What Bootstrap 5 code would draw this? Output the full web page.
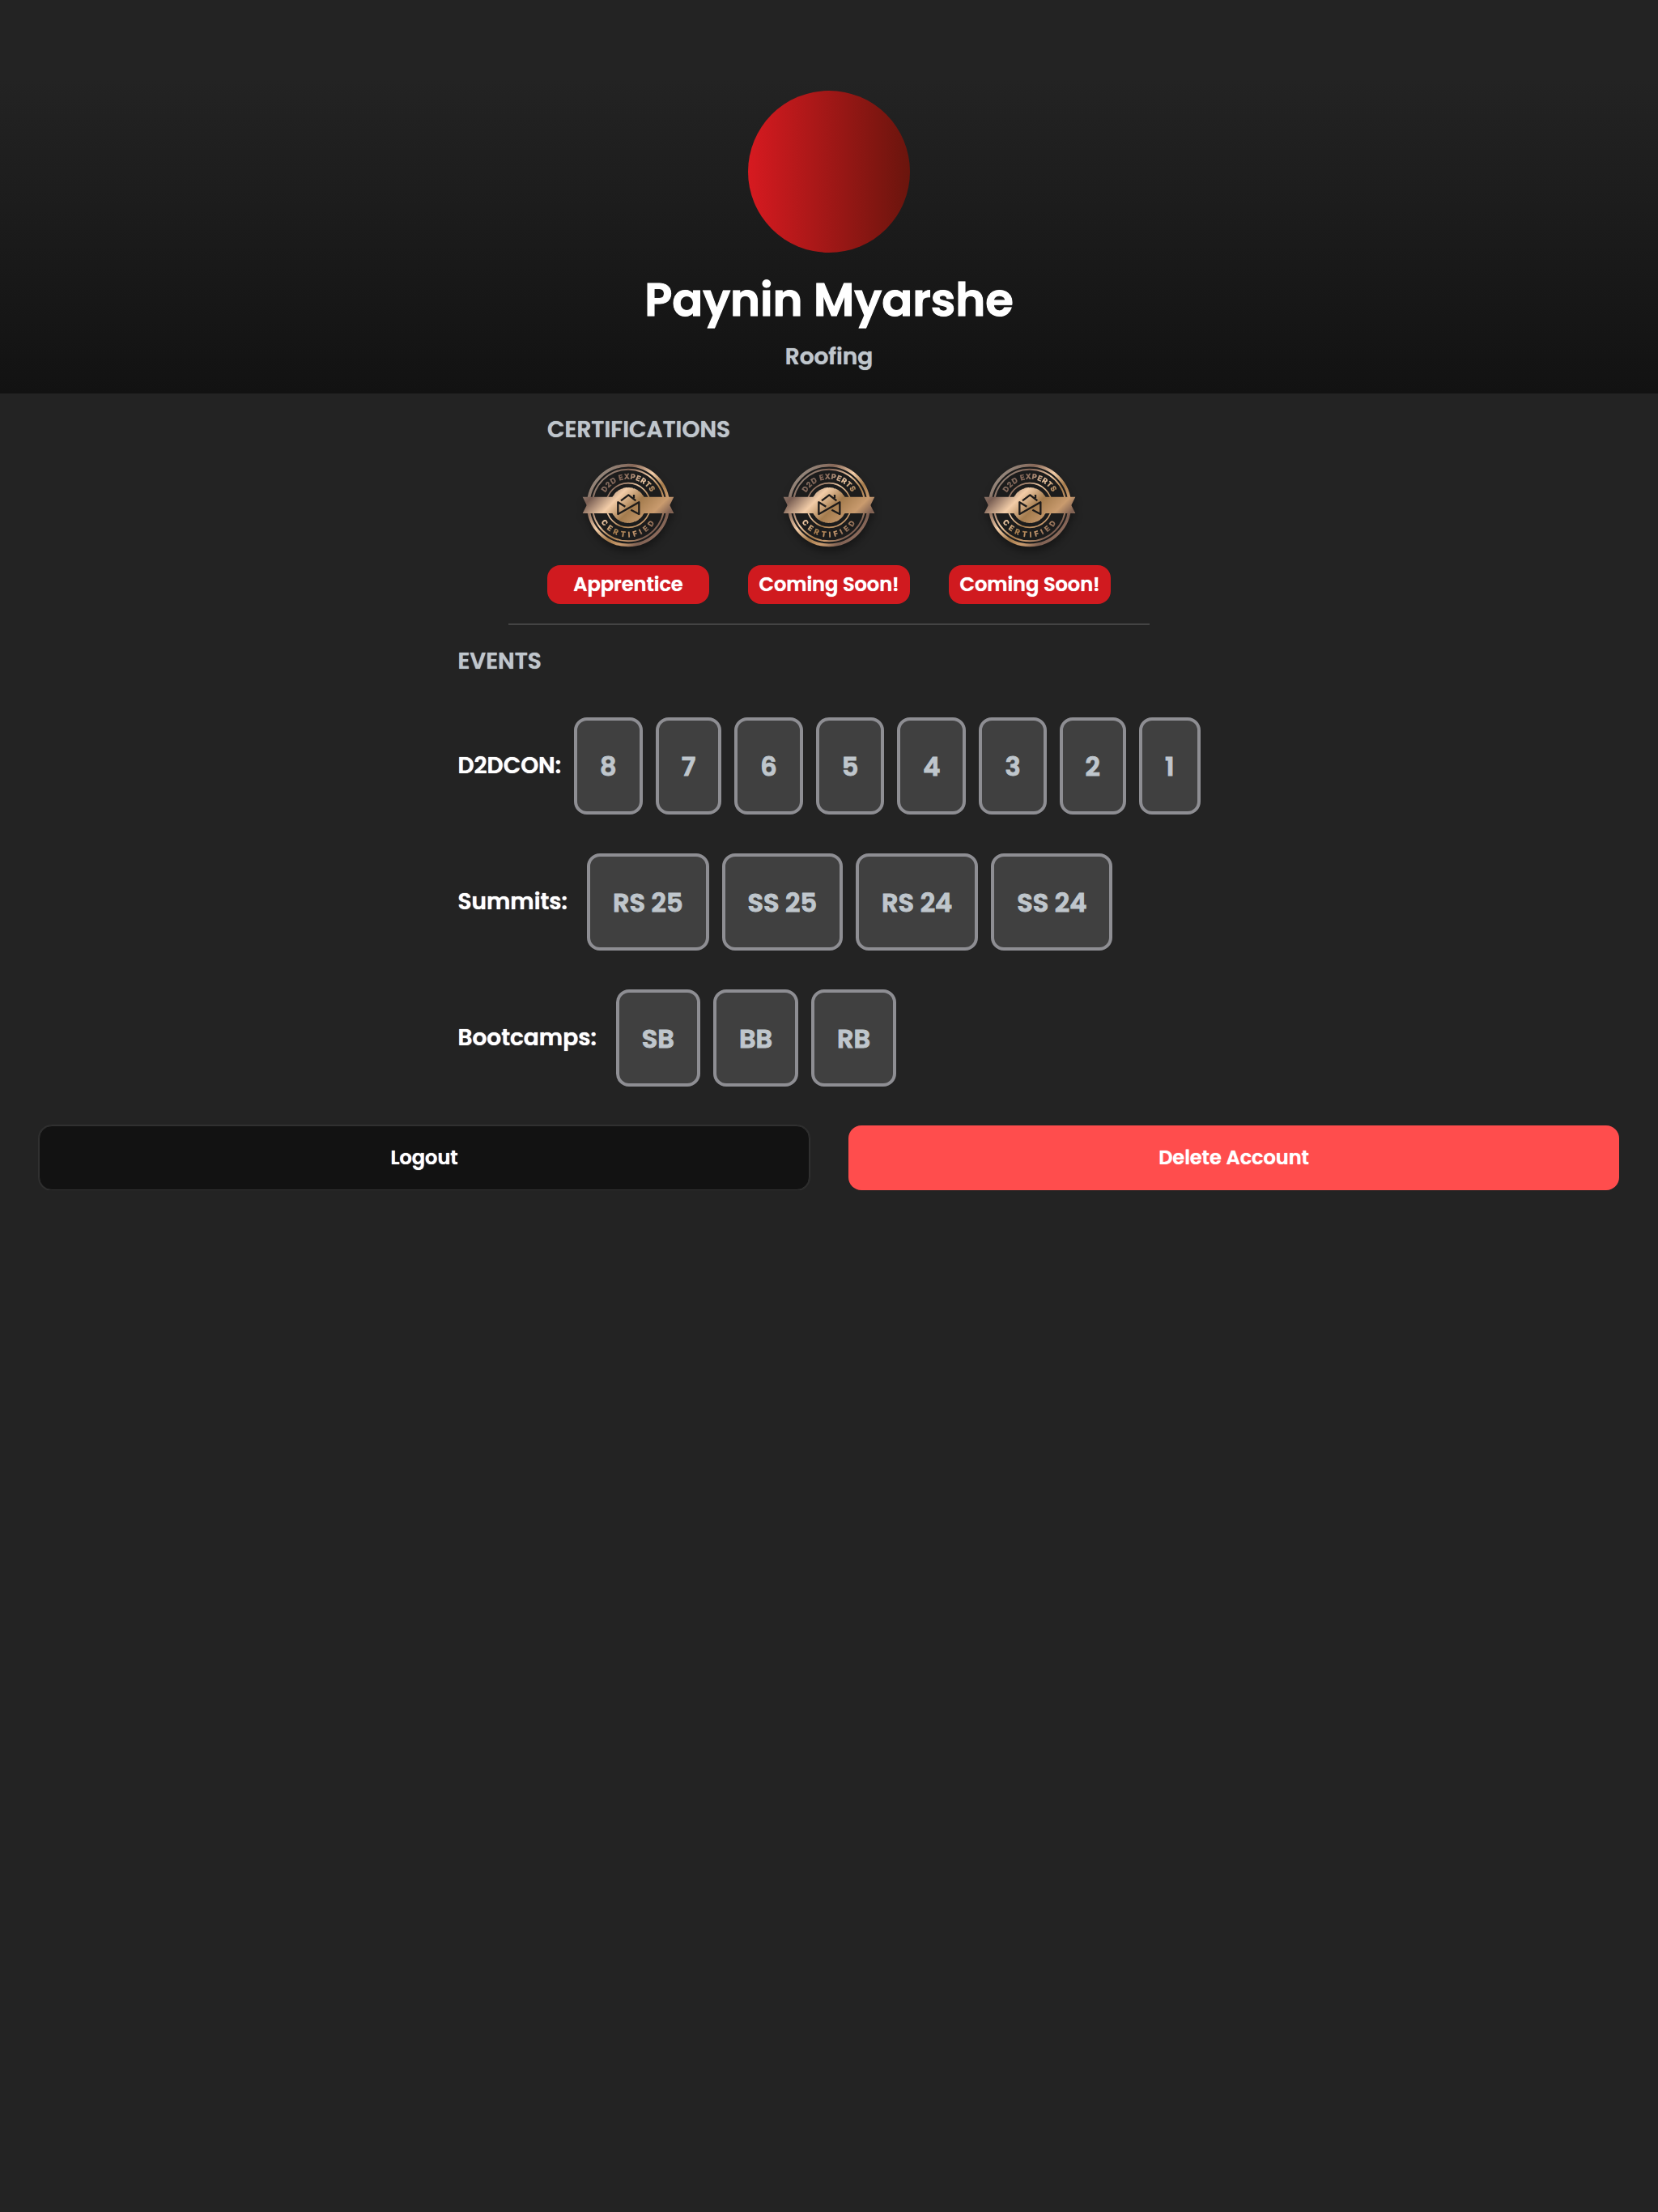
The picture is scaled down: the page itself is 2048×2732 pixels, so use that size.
<!DOCTYPE html>
<html lang="en">
<head>
<meta charset="utf-8">
<meta name="viewport" content="width=device-width, initial-scale=1">
<title>Paynin Myarshe</title>
<link href="https://cdn.jsdelivr.net/npm/bootstrap@5.3.0/dist/css/bootstrap.min.css" rel="stylesheet">
<style>
  body { background: #232323; color: #fff; font-family: Poppins, Inter, "Open Sans", sans-serif; font-weight: 600; text-shadow: 0 0 1px currentColor; }
  .profile-head { background: linear-gradient(#232323 20%, #121212); padding: 112px 48px 24px; }
  .avatar { width: 200px; height: 200px; background: linear-gradient(90deg, #d71a20, #6a150d); }
  .profile-name { font-size: 56px; line-height: 70px; font-weight: 600; margin: 24px 0 14px; -webkit-text-stroke: 1px currentColor; }
  .soft-label { font-size: 28px; line-height: 42px; font-weight: 600; color: #bfc6cc; margin: 0; }
  .certs { width: fit-content; padding: 24px 0; }
  .cert-list { gap: 48px; margin-top: 12px; }
  .cert-item { width: 200px; gap: 14px; }
  .cert-seal { width: 120px; height: 120px; filter: drop-shadow(1px 6px 5px rgba(0,0,0,.35)); text-shadow: none; }
  .cert-pill { width: 100%; background: #d01a1f; border-radius: 16px; font-size: 24px; line-height: 48px; }
  .rule { width: 792px; max-width: 100%; border-top: 2px solid #444; }
  .events { width: fit-content; padding: 24px 0 48px; }
  .event-rows { gap: 48px; margin-top: 48px; }
  .event-label { font-size: 28px; line-height: 42px; }
  .tile { height: 120px; padding: 2px 28px 0; background: #404040; border: 4px solid #8e8e93; border-radius: 16px; color: #bfc6cc; font-size: 32px; font-weight: 600; -webkit-text-stroke: 1px currentColor; text-shadow: none; }
  .actions { gap: 48px; padding: 0 48px; }
  .actions .btn { height: 80px; border-radius: 16px; font-size: 24px; font-weight: 600; color: #fff; text-shadow: inherit; }
  .btn-logout { background: #121212; border: 1px solid #303030; box-shadow: 0 0 0 1px #303030; }
  .btn-delete { background: #ff4d4d; border: 0; }
</style>
<script src="https://cdn.jsdelivr.net/npm/bootstrap@5.3.0/dist/js/bootstrap.bundle.min.js"></script>
</head>
<body>
<svg width="0" height="0" class="position-absolute" aria-hidden="true">
  <defs>
    <linearGradient id="bronze" gradientUnits="userSpaceOnUse" x1="60" y1="60" x2="300" y2="300">
      <stop offset="0" stop-color="#98877a"/><stop offset=".16" stop-color="#7a5f54"/>
      <stop offset=".36" stop-color="#f3cda8"/><stop offset=".55" stop-color="#a47c4e"/>
      <stop offset=".75" stop-color="#c99b6e"/><stop offset=".88" stop-color="#7d5f52"/><stop offset="1" stop-color="#c79a6e"/>
    </linearGradient>
    <linearGradient id="ringBronze" gradientUnits="userSpaceOnUse" x1="72" y1="72" x2="288" y2="288">
      <stop offset="0" stop-color="#95877c"/><stop offset=".2" stop-color="#856657"/>
      <stop offset=".43" stop-color="#f3cda8"/><stop offset=".62" stop-color="#a87d4d"/>
      <stop offset=".77" stop-color="#c99b6e"/><stop offset=".92" stop-color="#7d5f52"/><stop offset="1" stop-color="#8d6c5c"/>
    </linearGradient>
    <path id="arcTop" d="M83 180a97 97 0 0 1 194 0"/>
    <path id="arcBottom" d="M62 180a118 118 0 0 0 236 0"/>
    <symbol id="seal" viewBox="0 0 360 360">
      <circle cx="180" cy="180" r="150" fill="#1c1c1c"/>
      <g fill="none" stroke="url(#ringBronze)">
        <circle cx="180" cy="180" r="148" stroke-width="11"/>
        <circle cx="180" cy="180" r="133" stroke-width="6"/>
        <circle cx="180" cy="180" r="82" stroke-width="5"/>
      </g>
      <circle cx="180" cy="180" r="62" fill="url(#bronze)"/>
      <circle cx="180" cy="180" r="62" fill="none" stroke="url(#bronze)" stroke-width="8" stroke-linecap="round" stroke-dasharray="13 6.48"/>
      <path d="M11 149H349L334 180 349 210H11L26 180Z" fill="url(#bronze)"/>
      <g font-family="Inter, sans-serif" font-size="27" font-weight="700" fill="url(#ringBronze)" stroke="url(#ringBronze)" stroke-width="1" text-anchor="middle">
        <text letter-spacing="2"><textPath href="#arcTop" startOffset="50%">D2D EXPERTS</textPath></text>
        <text letter-spacing="12"><textPath href="#arcBottom" startOffset="51%">CERTIFIED</textPath></text>
      </g>
      <g fill="none" stroke="#1d1b1a" stroke-width="7" stroke-linejoin="round">
        <path d="M153 163L181 142 208 163M201 141V154"/>
        <path d="M169 185L142 169V213L220 169V213L190 197"/>
      </g>
    </symbol>
  </defs>
</svg>

<header class="profile-head d-flex flex-column align-items-center text-center">
  <div class="avatar rounded-circle"></div>
  <h1 class="profile-name">Paynin Myarshe</h1>
  <p class="soft-label">Roofing</p>
</header>

<main>
  <section class="certs mx-auto">
    <h2 class="soft-label">CERTIFICATIONS</h2>
    <div class="cert-list d-flex">
      <div class="cert-item d-flex flex-column align-items-center">
        <svg class="cert-seal" aria-hidden="true"><use href="#seal"/></svg>
        <div class="cert-pill text-center">Apprentice</div>
      </div>
      <div class="cert-item d-flex flex-column align-items-center">
        <svg class="cert-seal" aria-hidden="true"><use href="#seal"/></svg>
        <div class="cert-pill text-center">Coming Soon!</div>
      </div>
      <div class="cert-item d-flex flex-column align-items-center">
        <svg class="cert-seal" aria-hidden="true"><use href="#seal"/></svg>
        <div class="cert-pill text-center">Coming Soon!</div>
      </div>
    </div>
  </section>

  <div class="rule mx-auto"></div>

  <section class="events mx-auto">
    <h2 class="soft-label">EVENTS</h2>
    <div class="event-rows d-flex flex-column">
      <div class="d-flex align-items-center gap-3">
        <div class="event-label">D2DCON:</div>
        <div class="d-flex gap-3">
          <div class="tile d-flex align-items-center justify-content-center">8</div>
          <div class="tile d-flex align-items-center justify-content-center">7</div>
          <div class="tile d-flex align-items-center justify-content-center">6</div>
          <div class="tile d-flex align-items-center justify-content-center">5</div>
          <div class="tile d-flex align-items-center justify-content-center">4</div>
          <div class="tile d-flex align-items-center justify-content-center">3</div>
          <div class="tile d-flex align-items-center justify-content-center">2</div>
          <div class="tile d-flex align-items-center justify-content-center">1</div>
        </div>
      </div>
      <div class="d-flex align-items-center gap-4">
        <div class="event-label">Summits:</div>
        <div class="d-flex gap-3">
          <div class="tile d-flex align-items-center justify-content-center">RS 25</div>
          <div class="tile d-flex align-items-center justify-content-center">SS 25</div>
          <div class="tile d-flex align-items-center justify-content-center">RS 24</div>
          <div class="tile d-flex align-items-center justify-content-center">SS 24</div>
        </div>
      </div>
      <div class="d-flex align-items-center gap-4">
        <div class="event-label">Bootcamps:</div>
        <div class="d-flex gap-3">
          <div class="tile d-flex align-items-center justify-content-center">SB</div>
          <div class="tile d-flex align-items-center justify-content-center">BB</div>
          <div class="tile d-flex align-items-center justify-content-center">RB</div>
        </div>
      </div>
    </div>
  </section>

  <div class="actions d-flex">
    <button type="button" class="btn btn-logout flex-fill w-50">Logout</button>
    <button type="button" class="btn btn-delete flex-fill w-50">Delete Account</button>
  </div>
</main>
</body>
</html>
